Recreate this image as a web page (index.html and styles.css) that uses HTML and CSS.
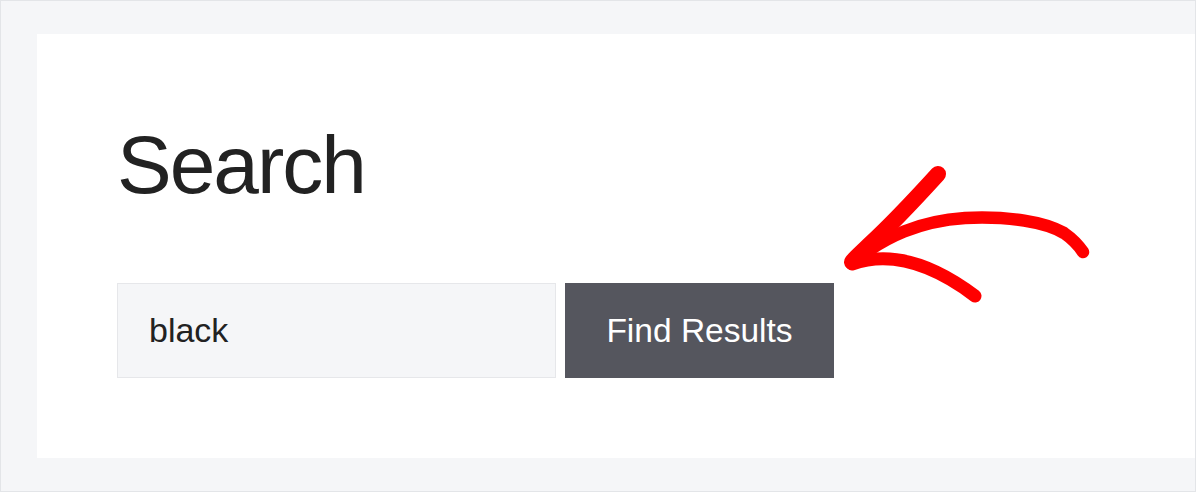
FILE: index.html
```html
<!DOCTYPE html>
<html lang="en">
<head>
<meta charset="utf-8">
<title>Search</title>
<link rel="stylesheet" href="styles.css">
</head>
<body>
<div class="page">
  <main class="panel">
    <h1 class="title">Search</h1>
    <form class="search-form">
      <input class="search-input" type="text" value="black">
      <button class="search-button" type="button">Find Results</button>
    </form>
  </main>
  <svg class="annotation" width="1196" height="492" viewBox="0 0 1196 492" aria-hidden="true">
    <g fill="none" stroke="#ff0000" stroke-linecap="round" stroke-linejoin="round">
      <path d="M938 174 C918 196 892 224 868 246 C862 252 856 257 852 262" stroke-width="16"/>
      <path d="M852 263 C885 236 920 221 965 218 C1010 216 1045 222 1064 233 C1074 240 1079 246 1083 252" stroke-width="12.5"/>
      <path d="M852 264 C890 251 930 262 975 296" stroke-width="13"/>
    </g>
  </svg>
</div>
</body>
</html>
```
FILE: styles.css
```css
html, body {
  margin: 0;
  padding: 0;
  background: #ffffff;
}

.page {
  position: relative;
  width: 1196px;
  height: 492px;
  box-sizing: border-box;
  border: 1px solid #e3e5e8;
  background: #f5f6f8;
  padding: 33px 0 0 36px;
  font-family: "Liberation Sans", Arial, sans-serif;
}

.panel {
  display: block;
  height: 424px;
  box-sizing: border-box;
  background: #ffffff;
  padding: 90px 0 0 80px;
}

.title {
  margin: 0;
  font-size: 82px;
  line-height: 1;
  font-weight: 400;
  letter-spacing: -2px;
  color: #222222;
}

.search-form {
  display: flex;
  gap: 9px;
  margin-top: 77px;
}

.search-input {
  width: 439px;
  height: 95px;
  box-sizing: border-box;
  border: 1px solid #e6e7ea;
  background: #f5f6f8;
  padding: 0 0 0 31px;
  margin: 0;
  font-family: "Liberation Sans", Arial, sans-serif;
  font-size: 34px;
  color: #222222;
  outline: none;
}

.search-button {
  width: 269px;
  height: 95px;
  box-sizing: border-box;
  border: none;
  margin: 0;
  background: #55565e;
  color: #ffffff;
  font-family: "Liberation Sans", Arial, sans-serif;
  font-size: 33.5px;
  padding: 0;
}

.annotation {
  position: absolute;
  left: -1px;
  top: -1px;
  pointer-events: none;
}
```
